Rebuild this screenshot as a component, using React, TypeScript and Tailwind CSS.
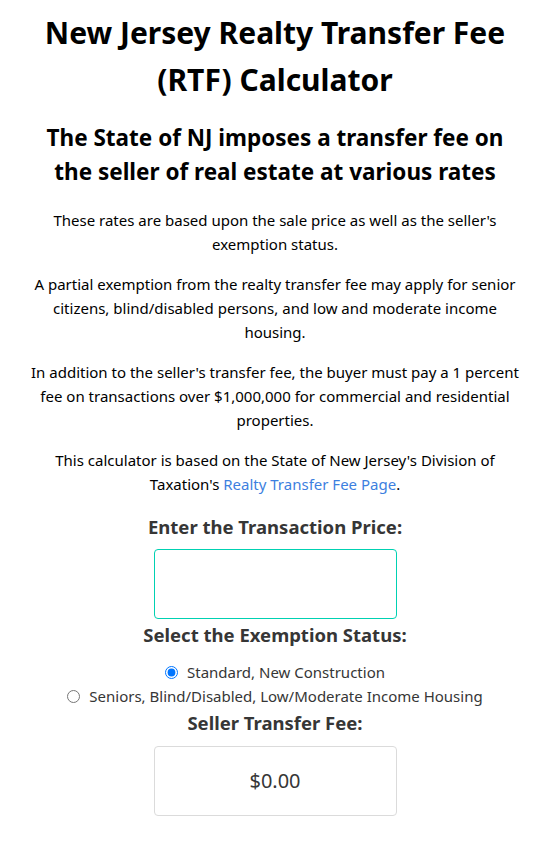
import React, { useState } from 'react';

const formatMoney = (n: number) =>
  '$' + n.toLocaleString('en-US', { minimumFractionDigits: 2, maximumFractionDigits: 2 });

// rough bracket table for the seller's fee (per $500 of consideration)
const sellerFee = (price: number, reduced: boolean): number => {
  if (!price || price <= 0) return 0;
  const units = Math.ceil(price / 500);
  const rate = reduced ? 2 : 4;
  return units * rate;
};

const App: React.FC = () => {
  const [price, setPrice] = useState<string>('');
  const [status, setStatus] = useState<'standard' | 'reduced'>('standard');

  const fee = sellerFee(parseFloat(price.replace(/[^0-9.]/g, '')), status === 'reduced');

  return (
    <div className="min-h-screen bg-white text-black text-center px-[29px] font-['Noto_Sans',sans-serif]">
      {/* titles */}
      <h1 className="pt-[9px] text-[30px] leading-[47px] font-bold">
        New Jersey Realty Transfer Fee (RTF) Calculator
      </h1>
      <h2 className="mt-[18px] text-[22.5px] leading-[34px] font-bold">
        The State of NJ imposes a transfer fee on the seller of real estate at various rates
      </h2>

      {/* intro copy */}
      <div className="mt-[19px] space-y-4 text-[15px] leading-6">
        <p>These rates are based upon the sale price as well as the seller's exemption status.</p>
        <p>
          A partial exemption from the realty transfer fee may apply for senior citizens, blind/disabled
          persons, and low and moderate income housing.
        </p>
        <p>
          In addition to the seller's transfer fee, the buyer must pay a 1 percent fee on transactions over
          $1,000,000 for commercial and residential properties.
        </p>
        <p>
          This calculator is based on the State of New Jersey's Division of Taxation's{' '}
          <a href="#" className="text-[#3d7fe0]">Realty Transfer Fee Page</a>.
        </p>
      </div>

      {/* calculator */}
      <div className="mt-4 flex flex-col items-center text-[#363636]">
        <label htmlFor="price" className="text-[18.5px] leading-[30px] font-bold">
          Enter the Transaction Price:
        </label>
        <input
          id="price"
          type="text"
          inputMode="decimal"
          value={price}
          onChange={(e) => setPrice(e.target.value)}
          className="mt-[7px] w-[243px] h-[70px] rounded border border-[#00d1b2] px-3 text-center text-[20px] outline-none"
        />

        <div className="mt-[1px] text-[18.5px] leading-[30px] font-bold">Select the Exemption Status:</div>
        <div className="mt-[10px] flex flex-col items-center text-[15px] leading-6 text-[#363636]">
          <label className="flex items-center gap-[9px] whitespace-nowrap">
            <input
              type="radio"
              name="status"
              className="m-0 size-[13px]"
              checked={status === 'standard'}
              onChange={() => setStatus('standard')}
            />
            Standard, New Construction
          </label>
          <label className="flex items-center gap-[9px] whitespace-nowrap">
            <input
              type="radio"
              name="status"
              className="m-0 size-[13px]"
              checked={status === 'reduced'}
              onChange={() => setStatus('reduced')}
            />
            Seniors, Blind/Disabled, Low/Moderate Income Housing
          </label>
        </div>

        <div className="text-[18.5px] leading-[30px] font-bold">Seller Transfer Fee:</div>
        <div className="mt-2 w-[243px] h-[70px] rounded border border-[#dbdbdb] flex items-center justify-center text-[20px]">
          {formatMoney(fee)}
        </div>
      </div>
    </div>
  );
};

export default App;
